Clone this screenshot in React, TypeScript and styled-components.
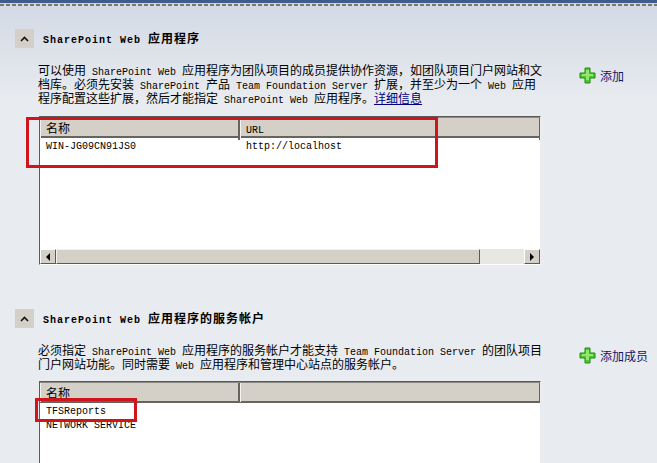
import * as React from "react";
import styled, { createGlobalStyle } from "styled-components";

const GlobalStyle = createGlobalStyle`
  html, body {
    margin: 0;
    padding: 0;
    height: 463px;
    overflow: hidden;
    background: #e8ebef;
  }
  body {
    font-family: "Noto Sans CJK SC", "Liberation Mono", sans-serif;
    font-size: 12px;
    color: #000;
  }
`;

const Page = styled.div`
  position: relative;
  width: 657px;
  height: 463px;
  overflow: hidden;
  display: flex;
  flex-direction: column;
  background: linear-gradient(#d3dae6 5px, #e8ebef 100px);
`;

const TopBar = styled.div`
  flex: none;
  height: 3px;
  background: #3f5c8c;
  border-bottom: 1px solid #d9d4b8;
`;

const DashLine = styled.div`
  flex: none;
  height: 2px;
  background: repeating-linear-gradient(90deg, #77786f 0 4px, #d9dcd8 4px 6px);
`;

const Section = styled.section<{ $top: number }>`
  flex: none;
  margin-top: ${(p) => p.$top}px;
  display: flex;
  flex-direction: column;
`;

const SectionHead = styled.div`
  display: flex;
  align-items: center;
  padding-left: 15px;
  gap: 9px;
  height: 19px;
`;

const Toggle = styled.div`
  width: 19px;
  height: 19px;
  background: #d4d0c8;
  display: flex;
  align-items: center;
  justify-content: center;
`;

const Title = styled.h2`
  margin: 0;
  padding-top: 1px;
  font-size: 12px;
  font-weight: 700;
  line-height: 14px;
  letter-spacing: 1px;
  white-space: pre;
`;

const Body = styled.div<{ $gap: number }>`
  display: grid;
  grid-template-columns: 503px 1fr;
  column-gap: 38px;
  padding-left: 38px;
  margin-top: ${(p) => p.$gap}px;
`;

const Description = styled.p`
  margin: 0;
  line-height: 14px;
  white-space: pre;
  font-size: 12px;
`;

const Line = styled.span`
  display: block;
  height: 14px;
`;

const Lat = styled.span<{ $bold?: boolean }>`
  font-family: "Liberation Mono", monospace;
  font-size: 10px;
  font-weight: ${(p) => (p.$bold ? 700 : 400)};
`;

const MoreLink = styled.a`
  color: #000080;
  text-decoration: underline;
`;

const AddLink = styled.div`
  display: flex;
  align-items: center;
  gap: 4px;
  color: #14146a;
  font-size: 12px;
  height: 16px;
  margin-top: 4px;
  white-space: nowrap;
`;

const ListBox = styled.div<{ $height: number; $top: number }>`
  margin-top: ${(p) => p.$top}px;
  margin-left: 1px;
  width: 502px;
  height: ${(p) => p.$height}px;
  box-sizing: border-box;
  background: #fff;
  border-style: solid;
  border-width: 1px;
  border-color: #5a5a5a #ececec #ffffff #5a5a5a;
  display: flex;
  flex-direction: column;
`;

const HeaderRow = styled.div<{ $height: number }>`
  display: grid;
  grid-template-columns: 200px 1fr;
  height: ${(p) => p.$height}px;
  flex: none;
  box-sizing: border-box;
  border-top: 1px solid #8a8880;
  border-bottom: 2px solid #66645e;
  background: #d4d0c8;
`;

const HeaderCell = styled.div`
  box-sizing: border-box;
  padding-left: 5px;
  line-height: 19px;
  border-right: 2px solid #66645e;
  border-left: 1px solid #f4f3ee;
  &:last-child {
    border-right: 1px solid #66645e;
  }
`;

const Rows = styled.div`
  flex: 1;
  padding-top: 2px;
`;

const Row = styled.div`
  display: grid;
  grid-template-columns: 200px 1fr;
  height: 14px;
  line-height: 14px;
`;

const Cell = styled.div`
  padding-left: 6px;
  font-family: "Liberation Mono", monospace;
  font-size: 10px;
  white-space: nowrap;
`;

const ScrollBar = styled.div`
  display: flex;
  height: 15px;
  flex: none;
  background: #e9e7e2;
`;

const ScrollButton = styled.div`
  width: 16px;
  box-sizing: border-box;
  background: #d4d0c8;
  border-style: solid;
  border-width: 1px;
  border-color: #fff #5a5a5a #5a5a5a #fff;
  display: flex;
  align-items: center;
  justify-content: center;
`;

const Thumb = styled.div<{ $width: number }>`
  width: ${(p) => p.$width}px;
  box-sizing: border-box;
  background: #d4d0c8;
  border-style: solid;
  border-width: 1px;
  border-color: #f4f3ee #5a5a5a #5a5a5a #f4f3ee;
`;

const Track = styled.div`
  flex: 1;
`;

const Callout = styled.div<{ $x: number; $y: number; $w: number; $h: number }>`
  position: absolute;
  left: ${(p) => p.$x}px;
  top: ${(p) => p.$y}px;
  width: ${(p) => p.$w}px;
  height: ${(p) => p.$h}px;
  box-sizing: border-box;
  border: 3px solid #d0141c;
`;

const PlusIcon = () => (
  <svg width="17" height="17" viewBox="0 0 17 17">
    <path d="M6 1h5v5h5v5h-5v5H6v-5H1V6h5z" fill="#4fc92c" stroke="#1f8a14" strokeWidth="1" />
    <path d="M7 3h3v4h4v2h-4v4H7V9H3V7h4z" fill="#8ee86a" />
  </svg>
);

const ChevronUp = () => (
  <svg width="9" height="6" viewBox="0 0 9 6">
    <path d="M1 5l3.5-3.5L8 5" fill="none" stroke="#111" strokeWidth="1.6" />
  </svg>
);

const ArrowLeft = () => (
  <svg width="4" height="8" viewBox="0 0 4 8">
    <path d="M4 0v8L0 4z" fill="#000" />
  </svg>
);

const ArrowRight = () => (
  <svg width="4" height="8" viewBox="0 0 4 8">
    <path d="M0 0v8l4-4z" fill="#000" />
  </svg>
);

export default function App() {
  return (
    <>
      <GlobalStyle />
      <Page>
        <TopBar />
        <DashLine />

        <Section $top={23}>
          <SectionHead>
            <Toggle>
              <ChevronUp />
            </Toggle>
            <Title>
              <Lat $bold>SharePoint Web </Lat>应用程序
            </Title>
          </SectionHead>
          <Body $gap={15}>
            <div>
              <Description>
                <Line>
                  可以使用<Lat> SharePoint Web </Lat>应用程序为团队项目的成员提供协作资源，如团队项目门户网站和文
                </Line>
                <Line>
                  档库。必须先安装<Lat> SharePoint </Lat>产品<Lat> Team Foundation Server </Lat>扩展，并至少为一个<Lat> Web </Lat>应用
                </Line>
                <Line>
                  程序配置这些扩展，然后才能指定<Lat> SharePoint Web </Lat>应用程序。<MoreLink>详细信息</MoreLink>
                </Line>
              </Description>
              <ListBox $height={149} $top={11}>
                <HeaderRow $height={21}>
                  <HeaderCell>名称</HeaderCell>
                  <HeaderCell>
                    <Lat>URL</Lat>
                  </HeaderCell>
                </HeaderRow>
                <Rows>
                  <Row>
                    <Cell>WIN-JG09CN91JS0</Cell>
                    <Cell>http://localhost</Cell>
                  </Row>
                </Rows>
                <ScrollBar>
                  <ScrollButton>
                    <ArrowLeft />
                  </ScrollButton>
                  <Thumb $width={424} />
                  <Track />
                  <ScrollButton>
                    <ArrowRight />
                  </ScrollButton>
                </ScrollBar>
              </ListBox>
            </div>
            <AddLink>
              <PlusIcon />
              添加
            </AddLink>
          </Body>
        </Section>

        <Section $top={44}>
          <SectionHead>
            <Toggle>
              <ChevronUp />
            </Toggle>
            <Title>
              <Lat $bold>SharePoint Web </Lat>应用程序的服务帐户
            </Title>
          </SectionHead>
          <Body $gap={15}>
            <div>
              <Description>
                <Line>
                  必须指定<Lat> SharePoint Web </Lat>应用程序的服务帐户才能支持<Lat> Team Foundation Server </Lat>的团队项目
                </Line>
                <Line>
                  门户网站功能。同时需要<Lat> Web </Lat>应用程序和管理中心站点的服务帐户。
                </Line>
              </Description>
              <ListBox $height={120} $top={10}>
                <HeaderRow $height={21}>
                  <HeaderCell>名称</HeaderCell>
                  <HeaderCell />
                </HeaderRow>
                <Rows>
                  <Row>
                    <Cell>TFSReports</Cell>
                  </Row>
                  <Row>
                    <Cell>NETWORK SERVICE</Cell>
                  </Row>
                </Rows>
              </ListBox>
            </div>
            <AddLink>
              <PlusIcon />
              添加成员
            </AddLink>
          </Body>
        </Section>

        <Callout $x={26} $y={117} $w={412} $h={51} />
        <Callout $x={35} $y={398} $w={102} $h={24} />
      </Page>
    </>
  );
}
